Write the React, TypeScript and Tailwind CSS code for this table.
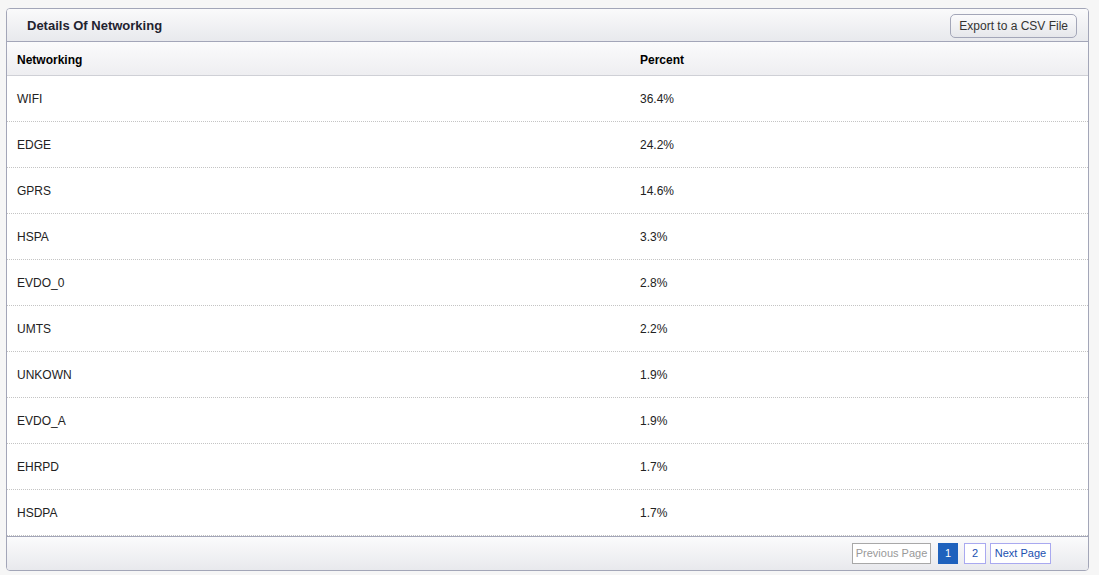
import React from "react";

const rows: [string, string][] = [
  ["WIFI", "36.4%"],
  ["EDGE", "24.2%"],
  ["GPRS", "14.6%"],
  ["HSPA", "3.3%"],
  ["EVDO_0", "2.8%"],
  ["UMTS", "2.2%"],
  ["UNKOWN", "1.9%"],
  ["EVDO_A", "1.9%"],
  ["EHRPD", "1.7%"],
  ["HSDPA", "1.7%"],
];

export default function App() {
  return (
    <div
      className="w-[1099px] h-[575px] bg-[#f6f6f6] pt-[8px] pl-[6px] text-[12px] text-[#222]"
      style={{ fontFamily: '"Liberation Sans", Arial, sans-serif' }}
    >
      <div className="w-[1083px] h-[563px] border border-[#a3a6b8] rounded-[4px] bg-white flex flex-col overflow-hidden">
        <div className="h-[33px] shrink-0 border-b border-[#a3a6b8] bg-gradient-to-b from-[#fafafb] to-[#e8e9ed] flex items-center justify-between pl-[20px] pr-[11px]">
          <div className="text-[13px] font-bold text-[#1f2330] pt-[2px]">Details Of Networking</div>
          <button className="h-[24px] px-[8px] rounded-[5px] border border-[#a3a6b8] bg-gradient-to-b from-[#fbfbfc] to-[#e6e7eb] text-[12px] text-[#333] mt-[2px]">
            Export to a CSV File
          </button>
        </div>
        <div className="h-[34px] shrink-0 border-b border-[#cfd0d6] bg-gradient-to-b from-[#fbfbfc] to-[#eeeef1] flex items-center font-bold text-[12px] text-black pt-[2px]">
          <div className="w-[623px] pl-[10px]">Networking</div>
          <div className="pl-[10px]">Percent</div>
        </div>
        <div className="flex flex-col">
          {rows.map(([n, p]) => (
            <div
              key={n}
              className="h-[46px] flex items-center border-b border-dotted border-[#c4c4c4] pt-[1px]"
            >
              <div className="w-[623px] pl-[10px]">{n}</div>
              <div className="pl-[10px]">{p}</div>
            </div>
          ))}
        </div>
        <div className="flex-1 border-t border-[#a3a6b8] bg-gradient-to-b from-[#fbfbfc] to-[#e8e9ed] flex items-center justify-end pr-[37px] text-[11px]">
          <div className="h-[21px] w-[79px] flex items-center justify-center border border-[#a8a8a8] bg-white text-[#999]">Previous Page</div>
          <div className="h-[21px] w-[20px] ml-[7px] flex items-center justify-center bg-[#1f62bd] border border-[#1f62bd] text-white">1</div>
          <div className="h-[21px] w-[22px] ml-[6px] flex items-center justify-center border border-[#a9a9f0] bg-white text-[#2050b0]">2</div>
          <div className="h-[21px] w-[61px] ml-[4px] flex items-center justify-center border border-[#a9a9f0] bg-white text-[#2050b0]">Next Page</div>
        </div>
      </div>
    </div>
  );
}
